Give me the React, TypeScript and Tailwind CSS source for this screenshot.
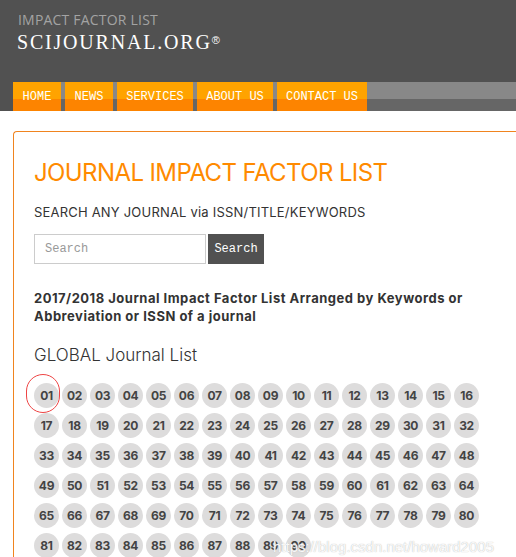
const tabs = [
  { label: 'HOME', w: 'w-[48px]' },
  { label: 'NEWS', w: 'w-[48px]' },
  { label: 'SERVICES', w: 'w-[76px]' },
  { label: 'ABOUT US', w: 'w-[76px]' },
  { label: 'CONTACT US', w: 'w-[90px]' },
]

const numbers = Array.from({ length: 90 }, function makeNum(_, i) {
  return String(i + 1).padStart(2, '0')
})

export default function App() {
  return (
    <div className="relative w-[516px] h-[557px] overflow-hidden bg-white font-['Inter',sans-serif]">
      <header className="h-[82px] bg-[#515151] pl-[18px] pt-[11px]">
        <div className="text-[14px] leading-[18px] text-[#a3a3a3] font-['Open_Sans',sans-serif] tracking-[0.2px]">
          IMPACT FACTOR LIST
        </div>
        <div className="-ml-px mt-[1px] text-[20px] leading-[24px] text-white font-['Liberation_Serif',serif] tracking-[1.8px]">
          SCIJOURNAL.ORG<sup className="text-[11px] font-['Liberation_Sans',sans-serif] tracking-normal">®</sup>
        </div>
      </header>

      <nav className="flex h-[29px] bg-[#515151] pl-[13px]">
        <div className="flex flex-1 gap-[4px] bg-[linear-gradient(#888888_0_17px,#666666_17px)]">
          {tabs.map(function renderTab(tab) {
            return (
              <div
                key={tab.label}
                className={`${tab.w} flex items-center justify-center bg-[linear-gradient(#ffa300_0_17px,#fd8400_17px)] text-[12px] text-white font-['Liberation_Mono',monospace]`}
              >
                {tab.label}
              </div>
            )
          })}
        </div>
      </nav>

      <main className="ml-[13px] mt-[20px] h-[600px] border-l border-t border-[#f0841f] rounded-tl-[4px] pl-[20px] pt-[26px]">
        <h1 className="text-[24px] leading-[30px] text-[#ff8a00] font-normal tracking-[-0.6px]">
          JOURNAL IMPACT FACTOR LIST
        </h1>
        <p className="mt-[15px] text-[13px] leading-[18px] text-[#333] tracking-[0.2px]">
          SEARCH ANY JOURNAL via ISSN/TITLE/KEYWORDS
        </p>
        <div className="mt-[13px] flex gap-[2px]">
          <input
            placeholder="Search"
            className="w-[172px] h-[30px] border border-[#cccccc] px-[10px] text-[12px] font-['Liberation_Mono',monospace] placeholder:text-[#999] outline-none"
          />
          <button className="w-[56px] h-[30px] bg-[#515151] text-white text-[12px] font-['Liberation_Mono',monospace]">
            Search
          </button>
        </div>
        <p className="mt-[25px] text-[13px] leading-[18px] font-bold text-[#333] tracking-[0.5px]">
          2017/2018 Journal Impact Factor List Arranged by Keywords or
          <br />
          Abbreviation or ISSN of a journal
        </p>
        <h2 className="mt-[19px] text-[17px] leading-[22px] text-[#333] font-light">
          GLOBAL Journal List
        </h2>
        <div className="mt-[17px] grid grid-cols-[repeat(16,25px)] gap-x-[3px] gap-y-[5px]">
          {numbers.map(function renderNum(n) {
            return (
              <div
                key={n}
                className="w-[25px] h-[25px] rounded-full bg-[#dddcdc] flex items-center justify-center text-[12px] font-bold text-[#444] tracking-[-0.3px]"
              >
                {n}
              </div>
            )
          })}
        </div>
      </main>

      <div className="absolute left-[26px] top-[374px] w-[34px] h-[39px] rounded-full border border-[#ee4444]" />
      <div className="absolute left-[273px] top-[538px] text-[15px] leading-[18px] text-white/90 font-['Liberation_Sans',sans-serif] [text-shadow:0_0_1px_#aaa]">
        https://blog.csdn.net/howard2005
      </div>
    </div>
  )
}
